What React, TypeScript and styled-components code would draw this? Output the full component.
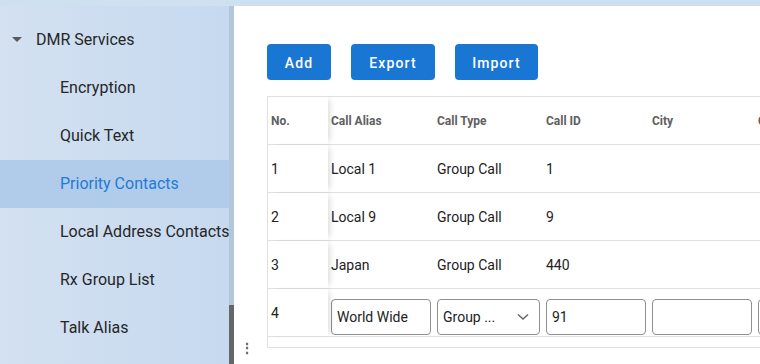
import React from "react";
import styled, { createGlobalStyle } from "styled-components";

const Global = createGlobalStyle`
  html, body { margin: 0; padding: 0; }
  body {
    width: 760px; height: 364px; overflow: hidden;
    background: #cfe0f1;
    font-family: Roboto, "Noto Sans", Arial, sans-serif;
  }
  * { box-sizing: border-box; }
`;

const Shell = styled.div`
  display: flex;
  height: 364px;
  padding-top: 6px;
`;

const Sidebar = styled.aside`
  display: flex;
  width: 234px;
  flex-shrink: 0;
  background: linear-gradient(90deg, #d3e1f1 0%, #c6d9ef 100%);
  overflow: hidden;
`;

const NavList = styled.nav`
  flex: 1;
  display: flex;
  flex-direction: column;
  padding-top: 10px;
  overflow: hidden;
  white-space: nowrap;
`;

const NavItem = styled.div<{ $active?: boolean; $group?: boolean }>`
  height: 48px;
  flex-shrink: 0;
  display: flex;
  align-items: center;
  gap: 14px;
  padding-left: ${(p) => (p.$group ? "12px" : "60px")};
  font-size: 16px;
  line-height: 18px;
  color: ${(p) => (p.$active ? "#1e7bd6" : "#262626")};
  background: ${(p) => (p.$active ? "#b1cbea" : "transparent")};
`;

const Scrollbar = styled.div`
  width: 5px;
  flex-shrink: 0;
  background: #b3c6dc;
  display: flex;
  flex-direction: column;
`;

const Thumb = styled.div`
  margin-top: auto;
  height: 59px;
  background: #666666;
`;

const Main = styled.main`
  position: relative;
  flex: 1;
  background: #ffffff;
  padding: 38px 0 0 33px;
  overflow: hidden;
`;

const Toolbar = styled.div`
  display: flex;
  gap: 20px;
  margin-bottom: 16px;
`;

const Button = styled.button<{ $w: number }>`
  width: ${(p) => p.$w}px;
  height: 36px;
  border: none;
  border-radius: 4px;
  background: #1976d2;
  color: #fff;
  font-family: Roboto, "Noto Sans", sans-serif;
  font-weight: 500;
  font-size: 14px;
  letter-spacing: 1.1px;
  padding: 2px 0 0;
`;

const TableWrap = styled.div`
  border-left: 1px solid #e0e0e0;
  border-top: 1px solid #e0e0e0;
  border-bottom: 1px solid #e0e0e0;
  padding-bottom: 10px;
  width: 520px;
  overflow: hidden;
`;

const Row = styled.div<{ $head?: boolean }>`
  display: grid;
  grid-template-columns: 60px 106px 109px 106px 106px 106px;
  height: 48px;
  border-bottom: 1px solid #e0e0e0;
  align-items: center;
  font-size: ${(p) => (p.$head ? "12px" : "14px")};
  font-weight: ${(p) => (p.$head ? 700 : 400)};
  color: ${(p) => (p.$head ? "#606060" : "#222")};
  white-space: nowrap;
`;

const Cell = styled.div<{ $sticky?: boolean }>`
  height: 100%;
  display: flex;
  align-items: center;
  padding: 0 3px;
  overflow: hidden;
  ${(p) =>
    p.$sticky &&
    `
    box-shadow: 5px 0 6px -3px rgba(0,0,0,0.14);
    position: relative;
    z-index: 1;
    background: #fff;
  `}
`;

const InputCell = styled(Cell)`
  padding-top: 9px;
`;

const TextInput = styled.input<{ $w?: number }>`
  width: ${(p) => p.$w ?? 100}px;
  height: 36px;
  border: 1px solid #8f8f8f;
  border-radius: 4px;
  padding: 0 5px;
  font-family: Roboto, "Noto Sans", sans-serif;
  font-size: 14px;
  color: #222;
  background: #fff;
  outline: none;
`;

const SelectBox = styled.div`
  width: 103px;
  height: 36px;
  border: 1px solid #8f8f8f;
  border-radius: 4px;
  display: flex;
  align-items: center;
  justify-content: space-between;
  padding: 0 10px 0 5px;
  font-size: 14px;
  color: #222;
  background: #fff;
`;

const Handle = styled.div`
  position: absolute;
  left: 7px;
  bottom: 10px;
  font-size: 12px;
  line-height: 12px;
  color: #4a5566;
  font-weight: 700;
`;

const Caret = () => (
  <svg width="10" height="6" viewBox="0 0 10 6">
    <path d="M0 0 L10 0 L5 5 Z" fill="#5a5a5a" />
  </svg>
);

const Chevron = () => (
  <svg width="12" height="8" viewBox="0 0 12 8">
    <path d="M1 1.5 L6 6 L11 1.5" stroke="#666" strokeWidth="1.5" fill="none" />
  </svg>
);

const rows = [
  ["1", "Local 1", "Group Call", "1"],
  ["2", "Local 9", "Group Call", "9"],
  ["3", "Japan", "Group Call", "440"],
];

export default function App() {
  return (
    <>
      <Global />
      <Shell>
        <Sidebar>
          <NavList>
            <NavItem $group>
              <Caret />
              DMR Services
            </NavItem>
            <NavItem>Encryption</NavItem>
            <NavItem>Quick Text</NavItem>
            <NavItem $active>Priority Contacts</NavItem>
            <NavItem>Local Address Contacts</NavItem>
            <NavItem>Rx Group List</NavItem>
            <NavItem>Talk Alias</NavItem>
          </NavList>
          <Scrollbar>
            <Thumb />
          </Scrollbar>
        </Sidebar>
        <Main>
          <Toolbar>
            <Button $w={64}>Add</Button>
            <Button $w={84}>Export</Button>
            <Button $w={83}>Import</Button>
          </Toolbar>
          <TableWrap>
            <Row $head>
              <Cell $sticky>No.</Cell>
              <Cell>Call Alias</Cell>
              <Cell>Call Type</Cell>
              <Cell>Call ID</Cell>
              <Cell>City</Cell>
              <Cell>Country</Cell>
            </Row>
            {rows.map((r) => (
              <Row key={r[0]}>
                <Cell $sticky>{r[0]}</Cell>
                <Cell>{r[1]}</Cell>
                <Cell>{r[2]}</Cell>
                <Cell>{r[3]}</Cell>
                <Cell />
                <Cell />
              </Row>
            ))}
            <Row>
              <Cell $sticky>4</Cell>
              <InputCell>
                <TextInput defaultValue="World Wide" />
              </InputCell>
              <InputCell>
                <SelectBox>
                  <span>Group ...</span>
                  <Chevron />
                </SelectBox>
              </InputCell>
              <InputCell>
                <TextInput defaultValue="91" />
              </InputCell>
              <InputCell>
                <TextInput defaultValue="" />
              </InputCell>
              <InputCell>
                <TextInput defaultValue="" />
              </InputCell>
            </Row>
          </TableWrap>
          <Handle>⋮</Handle>
        </Main>
      </Shell>
    </>
  );
}
